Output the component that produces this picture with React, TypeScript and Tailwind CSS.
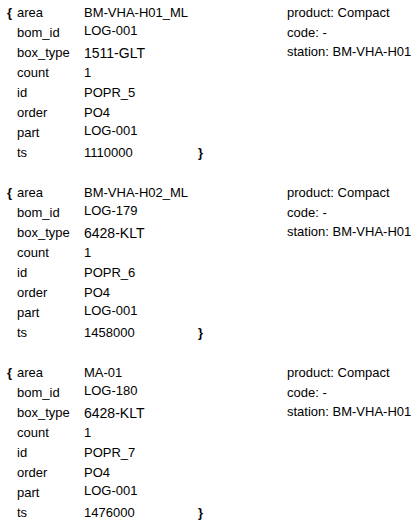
const records = [
  {
    area: 'BM-VHA-H01_ML',
    bom_id: 'LOG-001',
    box_type: '1511-GLT',
    count: '1',
    id: 'POPR_5',
    order: 'PO4',
    part: 'LOG-001',
    ts: '1110000',
    station: 'BM-VHA-H01',
  },
  {
    area: 'BM-VHA-H02_ML',
    bom_id: 'LOG-179',
    box_type: '6428-KLT',
    count: '1',
    id: 'POPR_6',
    order: 'PO4',
    part: 'LOG-001',
    ts: '1458000',
    station: 'BM-VHA-H01',
  },
  {
    area: 'MA-01',
    bom_id: 'LOG-180',
    box_type: '6428-KLT',
    count: '1',
    id: 'POPR_7',
    order: 'PO4',
    part: 'LOG-001',
    ts: '1476000',
    station: 'BM-VHA-H01',
  },
]

type Rec = (typeof records)[number]

const keys: (keyof Rec)[] = ['area', 'bom_id', 'box_type', 'count', 'id', 'order', 'part', 'ts']

function Record({ rec }: { rec: Rec }) {
  return (
    <div className="flex h-[180px] pt-[3px]">
      <div className="grid grid-cols-[17px_67px_114px_89px] auto-rows-[20px] leading-[20px]">
        {keys.map((k, i) => (
          <div key={k} className="contents">
            <div className="pl-[7px] font-bold">{i === 0 ? '{' : ''}</div>
            <div>{k}</div>
            <div
              className={
                k === 'box_type'
                  ? 'text-[14px]'
                  : k === 'bom_id' || k === 'part'
                    ? '-mt-[2px]'
                    : ''
              }
            >
              {rec[k]}
            </div>
            <div className="font-bold">{i === keys.length - 1 ? '}' : ''}</div>
          </div>
        ))}
      </div>
      <div className="flex flex-col leading-[19.5px]">
        <div>product: Compact</div>
        <div>code: -</div>
        <div>station: {rec.station}</div>
      </div>
    </div>
  )
}

export default function App() {
  return (
    <div className="w-[417px] h-[524px] bg-white text-black text-[13px] font-['Liberation_Sans',Arial,sans-serif] overflow-hidden">
      {records.map((r) => (
        <Record key={r.id} rec={r} />
      ))}
    </div>
  )
}
